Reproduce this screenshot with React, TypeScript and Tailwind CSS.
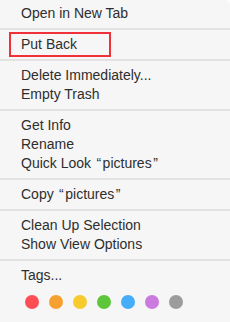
const SECTIONS: string[][] = [
  ['Open in New Tab'],
  ['Put Back'],
  ['Delete Immediately...', 'Empty Trash'],
  ['Get Info', 'Rename', 'Quick Look “pictures”'],
  ['Copy “pictures”'],
  ['Clean Up Selection', 'Show View Options'],
];

const TAG_COLORS = ['#fd4e55', '#f6a12f', '#f7ca2d', '#5ec63b', '#46aef8', '#cb7ae0', '#9c9c9c'];

function Separator() {
  return <div className="h-[2px] w-full bg-[#e2e2e2]" />;
}

// SF-style curly quotes sit a little wider than Arial's
function Label({ text }: { text: string }) {
  const parts = text.split(/([“”])/);
  return (
    <>
      {parts.map((p, i) =>
        p === '“' || p === '”' ? (
          <span key={i} className="mx-[1.5px]">{p}</span>
        ) : (
          <span key={i}>{p}</span>
        ),
      )}
    </>
  );
}

export default function App() {
  return (
    <div className="h-[322px] w-[230px] bg-white">
      <div
        className="h-full w-full overflow-hidden rounded-tr-[5px] bg-[#f6f6f6] text-[14px] text-[#2e2e2e]"
        style={{ fontFamily: '"Liberation Sans", Arial, sans-serif' }}
      >
        {SECTIONS.map((items, i) => (
          <div key={i}>
            <div className={i === 0 ? 'pt-[4px] pb-[5px]' : 'py-[5px]'}>
              {items.map((label) => (
                <div key={label} className="relative h-[19px] pl-[21px] leading-[19px]">
                  <Label text={label} />
                  {label === 'Put Back' && (
                    <div className="absolute left-[9px] top-[-3px] h-[25px] w-[102px] border-2 border-[#f0313a]" />
                  )}
                </div>
              ))}
            </div>
            <Separator />
          </div>
        ))}

        {/* Tags */}
        <div className="pt-[5px]">
          <div className="h-[19px] pl-[21px] leading-[19px]">Tags...</div>
          <div className="mt-[10px] flex gap-[10px] pl-[25px]">
            {TAG_COLORS.map((c) => (
              <span key={c} className="h-[14px] w-[14px] rounded-full" style={{ background: c }} />
            ))}
          </div>
        </div>
      </div>
    </div>
  );
}
